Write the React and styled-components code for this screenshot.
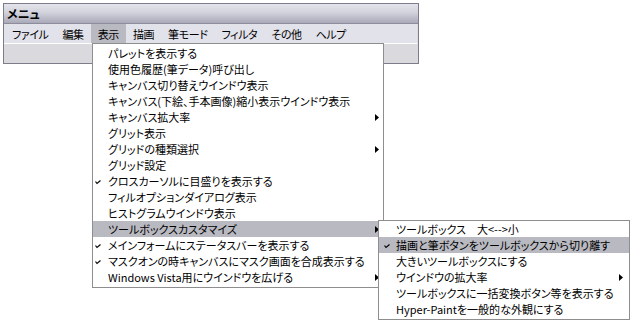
import React from "react";
import styled, { createGlobalStyle } from "styled-components";

const Global = createGlobalStyle`
  html, body { margin: 0; padding: 0; background: #ffffff; }
  body {
    font-family: "Noto Sans CJK JP", "Noto Sans", sans-serif;
    font-size: 11px;
    color: #000;
    font-feature-settings: "palt";
  }
`;

const Page = styled.div`
  position: relative;
  width: 639px;
  height: 330px;
  padding: 3px 0 0 3px;
  box-sizing: border-box;
`;

const Window = styled.div`
  width: 416px;
  height: 61px;
  box-sizing: border-box;
  border: 1px solid #7c7c8a;
  display: flex;
  flex-direction: column;
  background: #dcdce0;
`;

const TitleBar = styled.div`
  height: 19px;
  flex: none;
  display: flex;
  align-items: center;
  padding-left: 3px;
  font-weight: 700;
  font-size: 12px;
  background: linear-gradient(#e4e4ec 0%, #d2d2dc 45%, #a9a9b9 100%);
  border-bottom: 1px solid #8c8c9c;
`;

const MenuBar = styled.div`
  height: 19px;
  flex: none;
  display: flex;
  align-items: stretch;
  padding-left: 1px;
  background: #e2e2ea;
  border-bottom: 1px solid #ffffff;
  margin-right: 1px;
`;

const MenuTitle = styled.div`
  display: flex;
  align-items: center;
  padding: 0 7px;
  font-size: 11px;
  letter-spacing: -0.4px;
  background: ${(p) => (p.$active ? "#b9b9c1" : "transparent")};
`;

const Client = styled.div`
  flex: 1;
  background: #dadade;
`;

const Menu = styled.div`
  position: absolute;
  left: ${(p) => p.$left}px;
  top: ${(p) => p.$top}px;
  width: ${(p) => p.$width}px;
  box-sizing: border-box;
  border: 1px solid #8e8e8e;
  background: #ffffff;
  padding: ${(p) => p.$padTop}px 0 ${(p) => p.$padBottom}px 0;
  display: flex;
  flex-direction: column;
  z-index: ${(p) => p.$z || 1};
`;

const Item = styled.div`
  height: 16px;
  display: flex;
  align-items: center;
  white-space: nowrap;
  background: ${(p) => (p.$active ? "#b9b9c1" : "transparent")};
`;

const CheckSlot = styled.div`
  width: ${(p) => p.$w}px;
  flex: none;
  display: flex;
  align-items: center;
  padding-left: ${(p) => p.$pl}px;
  box-sizing: border-box;
  height: 100%;
  padding-top: 2px;
`;

const Label = styled.span`
  flex: 1;
`;

const ArrowSlot = styled.div`
  flex: none;
  width: ${(p) => p.$w}px;
  display: flex;
  align-items: center;
`;

const CheckMark = () => (
  <svg width="6" height="5" viewBox="0 0 6 5">
    <path d="M0.5 1.5 L2 3.5 L5.5 0.5" fill="none" stroke="#000" strokeWidth="1.2" />
  </svg>
);

const SubArrow = () => (
  <svg width="4" height="7" viewBox="0 0 4 7">
    <path d="M0 0 L4 3.5 L0 7 Z" fill="#000" />
  </svg>
);

const mainItems = [
  { t: "パレットを表示する" },
  { t: "使用色履歴(筆データ)呼び出し" },
  { t: "キャンバス切り替えウインドウ表示" },
  { t: "キャンバス(下絵、手本画像)縮小表示ウインドウ表示" },
  { t: "キャンバス拡大率", sub: true },
  { t: "グリット表示" },
  { t: "グリッドの種類選択", sub: true },
  { t: "グリッド設定" },
  { t: "クロスカーソルに目盛りを表示する", check: true },
  { t: "フィルオプションダイアログ表示" },
  { t: "ヒストグラムウインドウ表示" },
  { t: "ツールボックスカスタマイズ", sub: true, active: true },
  { t: "メインフォームにステータスバーを表示する", check: true },
  { t: "マスクオンの時キャンバスにマスク画面を合成表示する", check: true },
  { t: "Windows Vista用にウインドウを広げる", sub: true },
];

const subItems = [
  { t: "ツールボックス\u3000大<-->小" },
  { t: "描画と筆ボタンをツールボックスから切り離す", check: true, active: true },
  { t: "大きいツールボックスにする" },
  { t: "ウインドウの拡大率", sub: true },
  { t: "ツールボックスに一括変換ボタン等を表示する" },
  { t: "Hyper-Paintを一般的な外観にする" },
];

const menus = ["ファイル", "編集", "表示", "描画", "筆モード", "フィルタ", "その他", "ヘルプ"];

function MenuList({ items, checkW, checkPl, arrowW }) {
  return items.map((it) => (
    <Item key={it.t} $active={it.active}>
      <CheckSlot $w={checkW} $pl={checkPl}>{it.check && <CheckMark />}</CheckSlot>
      <Label>{it.t}</Label>
      <ArrowSlot $w={arrowW}>{it.sub && <SubArrow />}</ArrowSlot>
    </Item>
  ));
}

export default function App() {
  return (
    <>
      <Global />
      <Page>
        <Window>
          <TitleBar>メニュ</TitleBar>
          <MenuBar>
            {menus.map((m) => (
              <MenuTitle key={m} $active={m === "表示"}>
                {m}
              </MenuTitle>
            ))}
          </MenuBar>
          <Client />
        </Window>

        <Menu $left={92} $top={43} $width={292} $padTop={1} $padBottom={2}>
          <MenuList items={mainItems} checkW={15} checkPl={2} arrowW={8} />
        </Menu>

        <Menu $left={378} $top={220} $width={252} $padTop={0} $padBottom={2} $z={2}>
          <MenuList items={subItems} checkW={17} checkPl={5} arrowW={10} />
        </Menu>
      </Page>
    </>
  );
}
